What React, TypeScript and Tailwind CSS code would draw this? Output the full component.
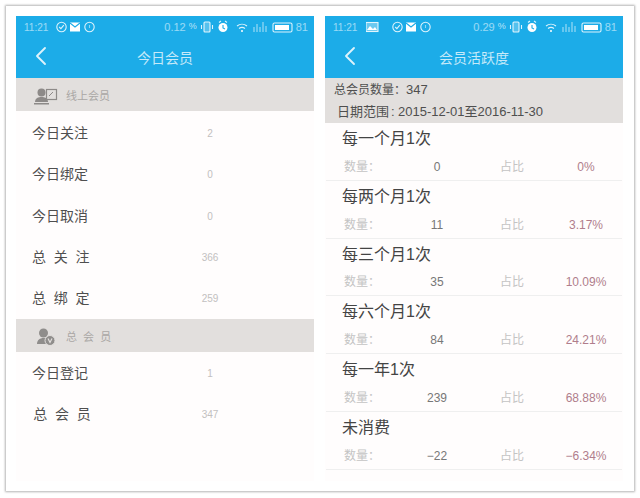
import React from 'react';
import { ChevronLeft } from 'lucide-react';

const FONT = '"Liberation Sans", "Noto Sans CJK SC", sans-serif';

const StatusIcons = () => (
  <svg width="95" height="14" viewBox="0 0 95 14" fill="none" stroke="white" strokeOpacity="0.85" strokeWidth="1.1">
    <rect x="6" y="2" width="6" height="10" rx="1" fill="white" fillOpacity="0.25" />
    <path d="M3.500 5v4M14.500 5v4" />
    <circle cx="25" cy="7.5" r="4.5" fill="white" stroke="none" />
    <path d="M21 2.5l2-1.5M29 2.5l-2-1.5" />
    <path d="M25 5v3l2 1" stroke="#1cace8" strokeOpacity="1" />
    <path d="M39 6a8 8 0 0 1 10 0M41 8.5a5 5 0 0 1 6 0" />
    <circle cx="44" cy="11" r="1" fill="white" stroke="none" />
    <path d="M56 12V7M59 12V4M62 12V7M65 12V2M68 12V6" strokeOpacity="0.6" />
    <rect x="75" y="3" width="19" height="9" rx="1.5" />
    <rect x="77" y="5" width="14" height="5" fill="white" stroke="none" />
  </svg>
);

const TopBar = ({ title, rate, extra }: { title: string; rate: string; extra?: boolean }) => (
  <div className="bg-[#1cace8] h-[62px] shrink-0 flex flex-col">
    <div className="h-[22px] flex items-center pl-2 pr-1.5 text-[10px] text-white/55 shrink-0">
      <span className={extra ? 'w-[33px] shrink-0' : 'w-[32px] shrink-0'}>11:21</span>
      <svg width={extra ? 66 : 40} height="14" viewBox={extra ? '-26 0 66 14' : '0 0 40 14'} fill="none" stroke="white" strokeOpacity="0.85" strokeWidth="1.1">
        {extra && (
          <g>
            <rect x="-26" y="2.5" width="12" height="9" fill="white" fillOpacity="0.35" />
            <path d="M-25 10l3-4 3 3 2-2 2 3z" fill="white" stroke="none" />
          </g>
        )}
        <circle cx="5.5" cy="7" r="4.7" />
        <path d="M3.2 7l1.7 1.7L7.8 5.2" />
        <rect x="14" y="2.5" width="10" height="9" fill="white" stroke="none" />
        <path d="M14 3l5 4 5-4" stroke="#1cace8" strokeOpacity="1" />
        <circle cx="33.5" cy="7" r="4.7" />
        <path d="M33.5 5v3" strokeOpacity="0.5" />
      </svg>
      <span className="ml-auto text-[11px]">{rate}</span>
      <span className="text-[9px] text-white/70 ml-[3px] w-[7px]">%</span>
      <span className="ml-[2px]"><StatusIcons /></span>
      <span className="ml-[3px] text-[11px]">81</span>
    </div>
    <div className="relative flex-1 flex items-center justify-center">
      <ChevronLeft size={32} strokeWidth={1.4} className="absolute left-[9px] top-[2px] text-white/85" />
      <span className="text-[14px] text-white/75">{title}</span>
    </div>
  </div>
);

const Section = ({ label, icon }: { label: string; icon: React.ReactNode }) => (
  <div className="h-[33px] bg-[#e2dfdd] flex items-center pl-[18px] pt-[3px] text-[11px] text-[#aaa7a5]">
    <span className="w-[32px] shrink-0">{icon}</span>
    <span className="whitespace-pre">{label}</span>
  </div>
);

const Row = ({ label, value }: { label: string; value: string }) => (
  <div className="h-[41.3px] flex items-center pl-4 text-[14px] text-[#4f4f4f]">
    <span className="w-[163px] shrink-0 whitespace-pre">{label}</span>
    <span className="w-[30px] text-center text-[10px] text-[#c2c0c0]">{value}</span>
  </div>
);

const Stat = ({ title, count, share }: { title: string; count: string; share: string }) => (
  <div className="h-[57.8px] mx-px border-b border-[#efefef] flex flex-col">
    <div className="h-[30px] pl-4 pt-[4px] text-[16px] leading-[24px] text-[#444444]">{title}</div>
    <div className="flex-1 flex items-center text-[12px] pt-px">
      <span className="w-[76px] pl-[18px] text-[#c4c4c4] shrink-0 whitespace-nowrap">数量{'\uFF1A'}</span>
      <span className="w-[70px] text-center text-[#777777] shrink-0">{count}</span>
      <span className="w-[70px] text-center text-[#c4c4c4] shrink-0 ml-[5px]">占比</span>
      <span className="w-[70px] text-center text-[#b07d8c] shrink-0 ml-[4px]">{share}</span>
    </div>
  </div>
);

const PersonChart = () => (
  <svg width="24" height="18" viewBox="0 0 24 18" fill="#8d8a88">
    <circle cx="7.5" cy="5.5" r="4" />
    <path d="M1 15c0-4 3.5-5 6.500-5s6.500 1 6.500 5z" />
    <path d="M0 16h15v1.500H0z" />
    <rect x="12.500" y="2.500" width="10" height="10" fill="none" stroke="#8d8a88" strokeWidth="1.2" />
    <path d="M15 9l4-4" stroke="#8d8a88" fill="none" />
  </svg>
);

const PersonBadge = () => (
  <svg width="20" height="18" viewBox="0 0 20 18" className="ml-[3px]" fill="#8f8d8b">
    <circle cx="6.500" cy="5" r="4.500" />
    <path d="M0 16c0-4 3-6 6.500-6s4 1 4 6z" />
    <circle cx="13" cy="12.500" r="5" stroke="#e2dfdd" />
    <path d="M11 10.500l2 4 2-4" fill="none" stroke="#e2dfdd" strokeWidth="1.2" />
  </svg>
);

export default function App() {
  return (
    <div className="w-[640px] h-[498px] bg-white p-[6px] overflow-hidden" style={{ fontFamily: FONT }}>
      <div className="w-[628px] h-[485px] bg-white shadow-[0_0_2px_1px_#b5b5b5] pt-[10px] pl-[10px] flex gap-[11px]">
        {/* left phone */}
        <div className="w-[298px] h-[465px] bg-[#fffdfd] flex flex-col">
          <TopBar title="今日会员" rate="0.12" />
          <Section label="线上会员" icon={<PersonChart />} />
          <div className="pt-[2px]">
            <Row label="今日关注" value="2" />
            <Row label="今日绑定" value="0" />
            <Row label="今日取消" value="0" />
            <Row label="总  关  注" value="366" />
            <Row label="总  绑  定" value="259" />
          </div>
          <Section label="总  会  员" icon={<PersonBadge />} />
          <div>
            <Row label="今日登记" value="1" />
            <Row label={'\u200A总  会  员'} value="347" />
          </div>
        </div>

        {/* right phone */}
        <div className="w-[298px] h-[465px] bg-[#fffdfd] flex flex-col">
          <TopBar title="会员活跃度" rate="0.29" extra />
          <div className="h-[45px] bg-[#e2dfdd] text-[#4f4f4f] pl-[9px] pt-[1px] leading-[21px] shrink-0">
            <div className="text-[12px] whitespace-nowrap">总会员数量{'\uFF1A'}<span className="text-[13px]">347</span></div>
            <div className="pl-[3px] text-[13px] whitespace-nowrap">
              日期范围<span className="inline-block w-[9px] pl-[2px]">:</span>2015-12-01至2016-11-30
            </div>
          </div>
          <Stat title="每一个月1次" count="0" share="0%" />
          <Stat title="每两个月1次" count="11" share="3.17%" />
          <Stat title="每三个月1次" count="35" share="10.09%" />
          <Stat title="每六个月1次" count="84" share="24.21%" />
          <Stat title="每一年1次" count="239" share="68.88%" />
          <Stat title="未消费" count="−22" share="−6.34%" />
        </div>
      </div>
    </div>
  );
}
